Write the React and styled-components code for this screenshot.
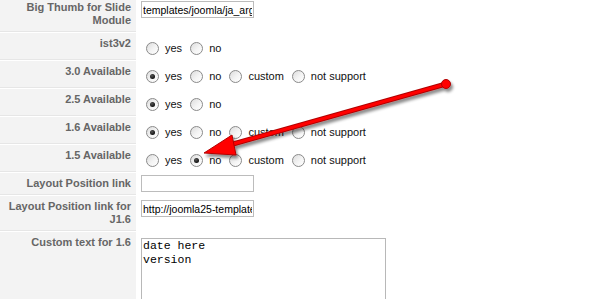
import React from "react";
import styled, { createGlobalStyle } from "styled-components";

const GlobalStyle = createGlobalStyle`
  html, body {
    margin: 0;
    padding: 0;
    background: #fff;
    overflow: hidden;
  }
  body {
    font-family: "Liberation Sans", Arial, sans-serif;
  }
`;

const Frame = styled.div`
  position: relative;
  width: 612px;
  height: 299px;
  overflow: hidden;
`;

// the page is scrolled a little, the first row is cut at the top
const Params = styled.div`
  margin-top: -3px;
`;

const Row = styled.div`
  display: grid;
  grid-template-columns: 136px 1fr;
  column-gap: 5px;
  margin-bottom: 1px;
`;

const Key = styled.div`
  background: #f3f3f3;
  border-bottom: 1px solid #e6e6e6;
  padding: 4px 5px 4px;
  text-align: right;
  font: bold 11px/13px "Liberation Sans", Arial, sans-serif;
  color: #666;
`;

const pads = {
  radio: "9px 0 5px",
  area: "6px 0 0",
  field: "4px 0 3px",
  short: "2px 0 3px",
};

const Value = styled.div`
  padding: ${(p) => pads[p.$kind || "field"]};
`;

const Options = styled.div`
  display: flex;
  align-items: center;
  gap: 8px;
  padding-left: 5px;
  font: 11px "Liberation Sans", Arial, sans-serif;
  color: #111;
`;

const Option = styled.label`
  display: flex;
  align-items: center;
  gap: 6px;
  line-height: 13px;
`;

const Radio = styled.span`
  position: relative;
  width: 13px;
  height: 13px;
  box-sizing: border-box;
  border-radius: 50%;
  border: 1px solid #8a8a8a;
  background: linear-gradient(135deg, #dcdcdc 0%, #f4f4f4 55%, #fff 100%);

  &::after {
    content: "";
    display: ${(p) => (p.$checked ? "block" : "none")};
    position: absolute;
    left: 3px;
    top: 3px;
    width: 5px;
    height: 5px;
    border-radius: 50%;
    background: radial-gradient(circle at 40% 35%, #555 0%, #111 70%);
  }
`;

const TextInput = styled.input`
  display: block;
  width: 113px;
  height: 17px;
  box-sizing: border-box;
  margin: 0;
  border: 1px solid #bcbcbc;
  padding: 0 1px;
  font: 10.5px "Liberation Sans", Arial, sans-serif;
  color: #000;
  background: #fff;
  outline: none;
`;

const TextArea = styled.textarea`
  display: block;
  width: 245px;
  height: 90px;
  box-sizing: border-box;
  margin: 0;
  border: 1px solid #b8b8b8;
  padding: 0 1px;
  font: 11.5px/14px "Liberation Mono", "Courier New", monospace;
  color: #000;
  resize: none;
  outline: none;
`;

const Overlay = styled.svg`
  position: absolute;
  left: 0;
  top: 0;
  pointer-events: none;
  overflow: visible;
`;

const RadioGroup = ({ items, checked }) => (
  <Options>
    {items.map((item) => (
      <Option key={item}>
        <Radio $checked={item === checked} />
        {item}
      </Option>
    ))}
  </Options>
);

const full = ["yes", "no", "custom", "not support"];

const Arrow = () => (
  <Overlay width="612" height="299">
    <defs>
      <filter id="shade" x="-20%" y="-40%" width="140%" height="180%">
        <feDropShadow dx="2" dy="3" stdDeviation="1.6" floodColor="#000" floodOpacity="0.45" />
      </filter>
    </defs>
    <g filter="url(#shade)">
      <line x1="446" y1="84" x2="226" y2="146" stroke="#b00000" strokeWidth="5" />
      <line x1="446" y1="84" x2="226" y2="146" stroke="#ff0000" strokeWidth="3" />
      <polygon points="204,153 232,135 236,155" fill="#ff0000" stroke="#b00000" strokeWidth="1" strokeLinejoin="round" />
      <circle cx="446" cy="84" r="4.5" fill="#ff0000" stroke="#b00000" strokeWidth="1" />
    </g>
  </Overlay>
);

export default function App() {
  return (
    <Frame>
      <GlobalStyle />
      <Params>
        <Row>
          <Key>Big Thumb for Slide Module</Key>
          <Value>
            <TextInput defaultValue="templates/joomla/ja_argentum/" />
          </Value>
        </Row>
        <Row>
          <Key>ist3v2</Key>
          <Value $kind="radio">
            <RadioGroup items={["yes", "no"]} />
          </Value>
        </Row>
        <Row>
          <Key>3.0 Available</Key>
          <Value $kind="radio">
            <RadioGroup items={full} checked="yes" />
          </Value>
        </Row>
        <Row>
          <Key>2.5 Available</Key>
          <Value $kind="radio">
            <RadioGroup items={["yes", "no"]} checked="yes" />
          </Value>
        </Row>
        <Row>
          <Key>1.6 Available</Key>
          <Value $kind="radio">
            <RadioGroup items={full} checked="yes" />
          </Value>
        </Row>
        <Row>
          <Key>1.5 Available</Key>
          <Value $kind="radio">
            <RadioGroup items={full} checked="no" />
          </Value>
        </Row>
        <Row>
          <Key>Layout Position link</Key>
          <Value $kind="short">
            <TextInput defaultValue="" />
          </Value>
        </Row>
        <Row>
          <Key>Layout Position link for J1.6</Key>
          <Value>
            <TextInput defaultValue="http://joomla25-templates.com" />
          </Value>
        </Row>
        <Row>
          <Key>Custom text for 1.6</Key>
          <Value $kind="area">
            <TextArea defaultValue={"date here\nversion"} />
          </Value>
        </Row>
      </Params>
      <Arrow />
    </Frame>
  );
}
